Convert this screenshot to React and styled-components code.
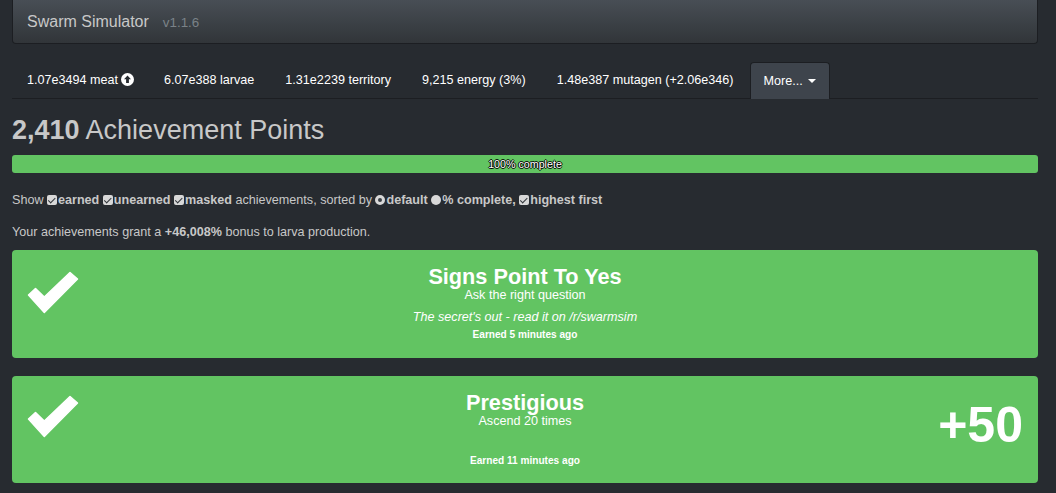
import React from "react";
import styled, { createGlobalStyle } from "styled-components";

const GlobalStyle = createGlobalStyle`
    html, body {
        margin: 0;
        background: #272b30;
    }
    body {
        font-family: "Liberation Sans", Arial, sans-serif;
        font-size: 12.6px;
        line-height: 17px;
        color: #c8c8c8;
    }
`;

const resources = [
    { label: "1.07e3494 meat", up: true },
    { label: "6.07e388 larvae" },
    { label: "1.31e2239 territory" },
    { label: "9,215 energy (3%)" },
    { label: "1.48e387 mutagen (+2.06e346)" },
];

const Check = () => (
    <CheckSvg viewBox="0 0 52 43" aria-hidden="true">
        <path
            d="M1.5 24L8.5 17.5L17.3 26L43 1.5L50.5 8L17.3 41.5Z"
            fill="#fff"
            stroke="#fff"
            strokeWidth="1.5"
            strokeLinejoin="round"
        />
    </CheckSvg>
);

const UpIcon = () => (
    <UpSvg viewBox="0 0 13 13" aria-hidden="true">
        <circle cx="6.5" cy="6.5" r="6.5" fill="#fff" />
        <path d="M6.5 2.6L10 6.3H7.9V10H5.1V6.3H3Z" fill="#272b30" />
    </UpSvg>
);

const App = () => {
    return (
        <Page>
            <GlobalStyle />
            <Navbar>
                <Brand>Swarm Simulator</Brand>
                <Version>v1.1.6</Version>
            </Navbar>
            <Tabs>
                {resources.map((r) => (
                    <Tab key={r.label}>
                        {r.label}
                        {r.up && <UpIcon />}
                    </Tab>
                ))}
                <MoreTab>
                    More...
                    <Caret />
                </MoreTab>
            </Tabs>
            <Heading>
                <b>2,410</b> Achievement Points
            </Heading>
            <Progress>100% complete</Progress>
            <Filters>
                Show <Box type="checkbox" defaultChecked /><b>earned</b> <Box type="checkbox" defaultChecked /><b>unearned</b>{" "}
                <Box type="checkbox" defaultChecked /><b>masked</b> achievements, sorted by{" "}
                <Round $on /><b>default</b> <Round />
                <b>% complete,</b> <Box type="checkbox" defaultChecked /><b>highest first</b>
            </Filters>
            <Bonus>
                Your achievements grant a <b>+46,008%</b> bonus to larva production.
            </Bonus>
            <Card>
                <CheckCell><Check /></CheckCell>
                <Body>
                    <Title>Signs Point To Yes</Title>
                    <Desc>Ask the right question</Desc>
                    <Flavor>The secret's out - read it on /r/swarmsim</Flavor>
                    <Earned>Earned 5 minutes ago</Earned>
                </Body>
                <span />
            </Card>
            <Card $short>
                <CheckCell $short><Check /></CheckCell>
                <Body>
                    <Title>Prestigious</Title>
                    <Desc>Ascend 20 times</Desc>
                    <Flavor>&nbsp;</Flavor>
                    <Earned>Earned 11 minutes ago</Earned>
                </Body>
                <Points>+50</Points>
            </Card>
        </Page>
    );
};

export default App;

const Page = styled.div`
    width: 1026px;
    margin-left: 12px;
    height: 493px;
    overflow: hidden;
`;

const Navbar = styled.div`
    box-sizing: border-box;
    height: 44px;
    padding: 13px 14px 0;
    display: flex;
    align-items: baseline;
    background: linear-gradient(#484e55, #3a3f44 60%, #313539);
    border: 1px solid #1c1e22;
    border-top: 0;
    border-radius: 0 0 4px 4px;
`;

const Brand = styled.span`
    font-size: 16px;
    line-height: 17px;
    color: #c8c8c8;
`;

const Version = styled.span`
    margin-left: 14px;
    font-size: 13.4px;
    color: #7a8288;
`;

const Tabs = styled.div`
    box-sizing: border-box;
    height: 37px;
    margin-top: 18px;
    display: flex;
    align-items: stretch;
    gap: 1px;
    border-bottom: 1px solid #1c1e22;
`;

const Tab = styled.div`
    display: flex;
    align-items: center;
    padding: 0 15px;
    color: #fff;
`;

const MoreTab = styled(Tab)`
    padding: 0 13px;
    margin-bottom: -1px;
    background: #3e444c;
    border: 1px solid #1c1e22;
    border-bottom: 0;
    border-radius: 4px 4px 0 0;
`;

const Caret = styled.span`
    margin-left: 5px;
    border-top: 4px solid #fff;
    border-left: 4px solid transparent;
    border-right: 4px solid transparent;
`;

const UpSvg = styled.svg`
    width: 13px;
    height: 13px;
    margin: -2px -1px 0 3px;
`;

const Heading = styled.h1`
    margin: 17px 0 0;
    font-size: 27px;
    line-height: 29px;
    font-weight: 400;
    color: #c8c8c8;
    b {
        font-weight: 700;
    }
`;

const Progress = styled.div`
    height: 18px;
    margin-top: 10px;
    background: #62c462;
    border-radius: 3px;
    text-align: center;
    font-size: 10.7px;
    line-height: 18px;
    color: #fff;
    text-shadow: 0 -1px 0 #000, 0 1px 0 #000, 1px 0 0 #000, -1px 0 0 #000;
`;

const Filters = styled.p`
    margin: 19px 0 0;
    height: 17px;
    white-space: nowrap;
`;

const Box = styled.input`
    appearance: none;
    box-sizing: border-box;
    position: relative;
    width: 10px;
    height: 10px;
    margin: 0 1px 0 0;
    vertical-align: -1px;
    background: #d8d8d8;
    border-radius: 2px;
    &::after {
        content: "";
        position: absolute;
        left: 3px;
        top: 0.5px;
        width: 2.5px;
        height: 5.5px;
        border: solid #33373c;
        border-width: 0 1.5px 1.5px 0;
        transform: rotate(45deg);
    }
`;

const Round = styled.span`
    display: inline-block;
    box-sizing: border-box;
    width: 10px;
    height: 10px;
    margin-right: 1px;
    vertical-align: -1px;
    border-radius: 50%;
    background: ${(p) => (p.$on ? "#3a3f44" : "#d8d8d8")};
    border: ${(p) => (p.$on ? "3px solid #d8d8d8" : "0")};
`;

const Bonus = styled.p`
    margin: 15px 0 0;
`;

const Card = styled.div`
    box-sizing: border-box;
    height: ${(p) => (p.$short ? "107px" : "108px")};
    margin-top: 9px;
    display: grid;
    grid-template-columns: 1fr auto 1fr;
    background: #62c462;
    border-radius: 4px;
    color: #fff;
    & + & {
        margin-top: 18px;
    }
`;

const CheckCell = styled.div`
    padding: ${(p) => (p.$short ? "19px" : "21px")} 0 0 15px;
`;

const CheckSvg = styled.svg`
    display: block;
    width: 52px;
    height: 43px;
`;

const Body = styled.div`
    padding-top: 14px;
    text-align: center;
`;

const Title = styled.div`
    font-size: 21.7px;
    line-height: 25px;
    font-weight: 700;
`;

const Desc = styled.div`
    line-height: 13px;
`;

const Flavor = styled.div`
    margin-top: 8px;
    font-size: 12.6px;
    line-height: 15px;
    font-style: italic;
`;

const Earned = styled.div`
    margin-top: 3px;
    font-size: 10.1px;
    line-height: 14px;
    font-weight: 700;
`;

const Points = styled.div`
    justify-self: end;
    padding: 19px 15px 0 0;
    font-size: 50px;
    line-height: 60px;
    font-weight: 700;
`;
